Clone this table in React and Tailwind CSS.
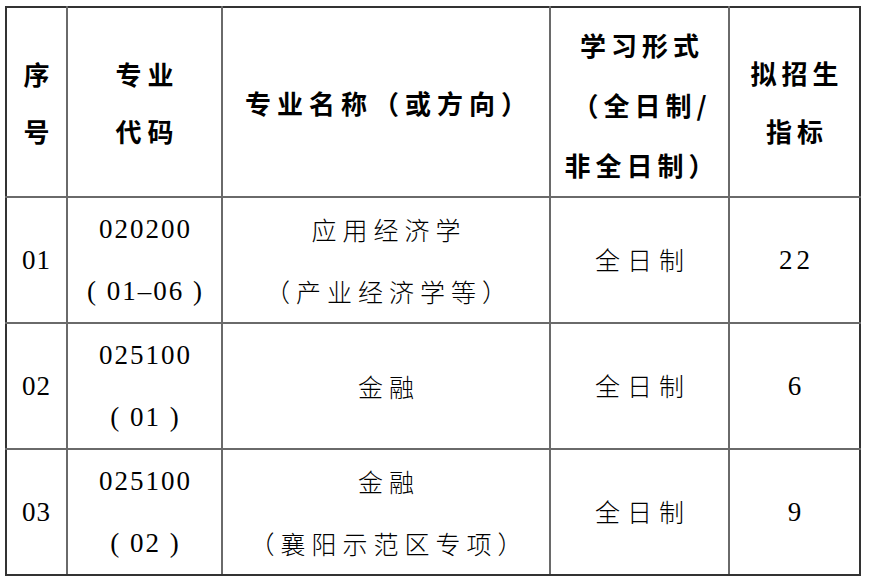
const rows = [
  {
    no: "01",
    code: ["020200", "( 01–06 )"],
    name: ["应用经济学", "（产业经济学等）"],
    mode: "全日制",
    quota: "22",
  },
  {
    no: "02",
    code: ["025100", "( 01 )"],
    name: ["金融"],
    mode: "全日制",
    quota: "6",
  },
  {
    no: "03",
    code: ["025100", "( 02 )"],
    name: ["金融", "（襄阳示范区专项）"],
    mode: "全日制",
    quota: "9",
  },
];

const cjk = "font-['Noto_Sans_CJK_SC',sans-serif]";
const num = "font-['Liberation_Serif','Times_New_Roman','DejaVu_Serif',serif]";
const cell = "border-2 border-[#6a6a6a] text-center align-middle p-0";

const App = () => {
  return (
    <div className="w-[870px] h-[582px] bg-white pl-[5px] pt-[6px] text-black">
      <table className="border-collapse table-fixed w-[854px] border-2 border-[#333]">
        <colgroup>
          <col className="w-[61px]" />
          <col className="w-[155px]" />
          <col className="w-[328px]" />
          <col className="w-[179px]" />
          <col className="w-[131px]" />
        </colgroup>
        <thead>
          <tr className={`h-[190px] ${cjk} text-[26px] font-medium`}>
            <th className={`${cell} border-l-[#333] border-t-[#333] leading-[57px]`}>
              序<br />号
            </th>
            <th className={`${cell} border-t-[#333] leading-[57px] tracking-[6px] pl-[6px]`}>
              专业<br />代码
            </th>
            <th className={`${cell} border-t-[#333] tracking-[6px] pl-[6px]`}>
              专业名称（或方向）
            </th>
            <th className={`${cell} border-t-[#333] leading-[60px] tracking-[5px] pl-[5px] pt-[6px]`}>
              学习形式<br />（全日制/<br />非全日制）
            </th>
            <th className={`${cell} border-t-[#333] border-r-[#333] leading-[58px] tracking-[5px] pl-[5px]`}>
              拟招生<br />指标
            </th>
          </tr>
        </thead>
        <tbody>
          {rows.map((row, i) => (
            <tr key={row.no} className="h-[126px]">
              <td className={`${cell} border-l-[#333] ${i === 2 ? "border-b-[#333]" : ""} ${num} text-[27px] tracking-[1px]`}>
                {row.no}
              </td>
              <td className={`${cell} ${i === 2 ? "border-b-[#333]" : ""} ${num} text-[27px] leading-[62px] tracking-[2px] pl-[2px]`}>
                {row.code[0]}
                <br />
                {row.code[1]}
              </td>
              <td className={`${cell} ${i === 2 ? "border-b-[#333]" : ""} ${cjk} font-light text-[25px] leading-[62px] tracking-[6px] pl-[6px]`}>
                {row.name.map((n, j) => (
                  <div key={j}>{n}</div>
                ))}
              </td>
              <td className={`${cell} ${i === 2 ? "border-b-[#333]" : ""} ${cjk} font-light text-[25px] tracking-[7px] pl-[7px]`}>
                {row.mode}
              </td>
              <td className={`${cell} border-r-[#333] ${i === 2 ? "border-b-[#333]" : ""} ${num} text-[27px] tracking-[4px] pl-[4px]`}>
                {row.quota}
              </td>
            </tr>
          ))}
        </tbody>
      </table>
    </div>
  );
};

export default App;
